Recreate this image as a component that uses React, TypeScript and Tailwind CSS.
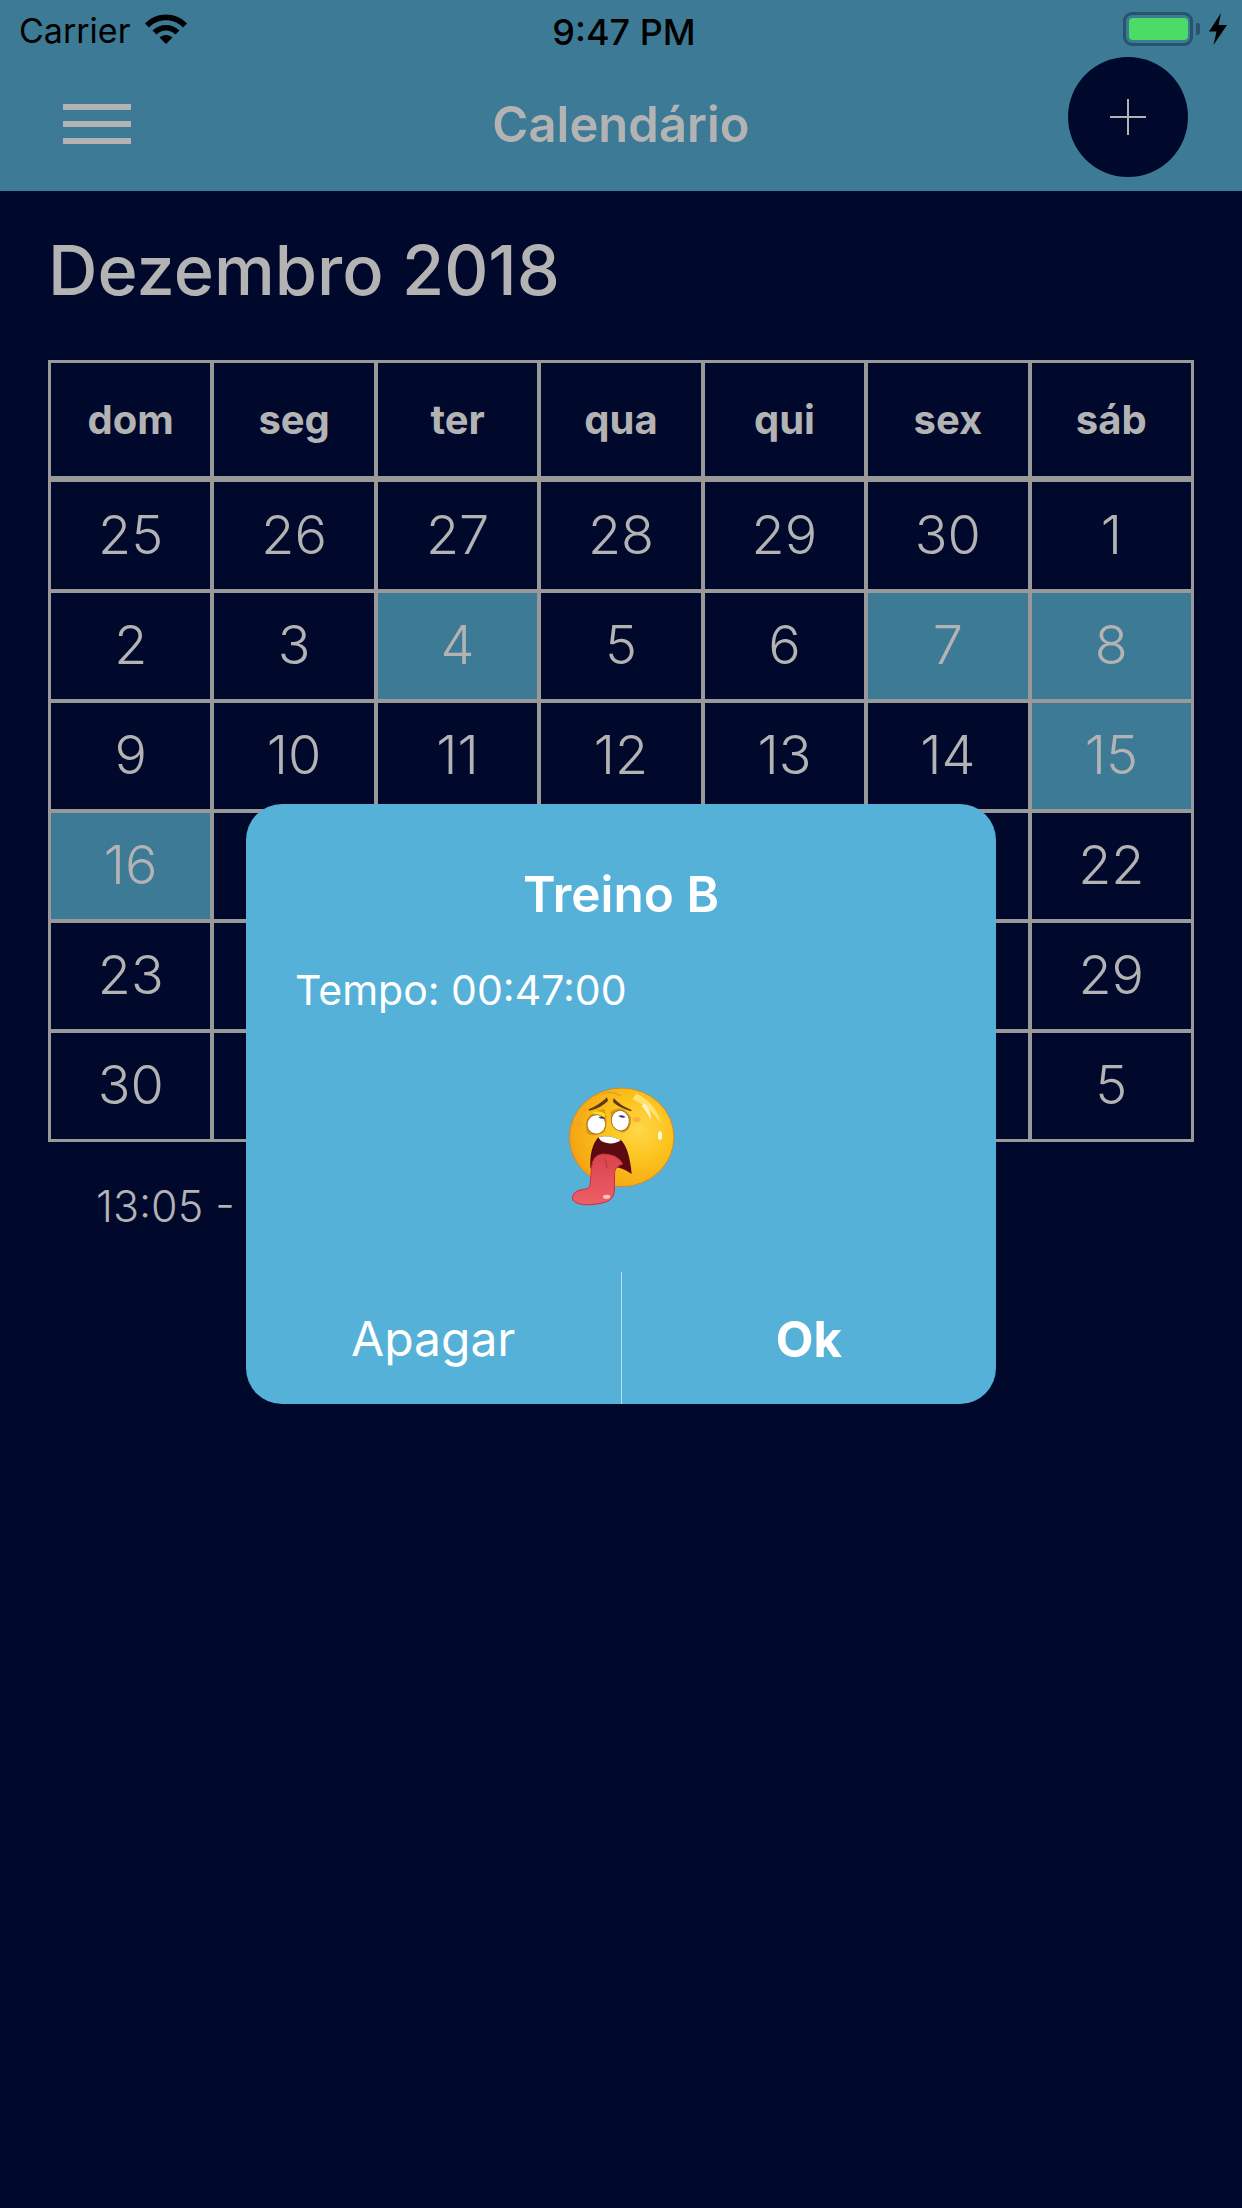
const rows = [
  [25, 26, 27, 28, 29, 30, 1],
  [2, 3, 4, 5, 6, 7, 8],
  [9, 10, 11, 12, 13, 14, 15],
  [16, 17, 18, 19, 20, 21, 22],
  [23, 24, 25, 26, 27, 28, 29],
  [30, 31, 1, 2, 3, 4, 5],
];
const days = ["dom", "seg", "ter", "qua", "qui", "sex", "sáb"];
const marked = new Set(["1-2", "1-5", "1-6", "2-6", "3-0"]);

function Emoji() {
  return (
    <svg width="200" height="170" viewBox="0 0 600 510" className="block">
      <defs>
        <radialGradient id="face" cx="0.66" cy="0.42" r="0.72">
          <stop offset="0" stopColor="#ffd84a" />
          <stop offset="0.45" stopColor="#fcc21c" />
          <stop offset="0.85" stopColor="#f6a914" />
          <stop offset="1" stopColor="#ee9a12" />
        </radialGradient>
        <linearGradient id="tongue" x1="0" y1="0" x2="0" y2="1">
          <stop offset="0" stopColor="#d9434f" />
          <stop offset="1" stopColor="#ee5f66" />
        </linearGradient>
      </defs>
      <ellipse cx="302" cy="232" rx="157" ry="148" fill="url(#face)" stroke="#c98a3a" strokeWidth="3" />
      <path d="M345 100 Q405 130 420 190 Q385 140 335 118 Z" fill="#ffe98a" opacity="0.75" />
      <path d="M370 130 Q390 148 390 180 Q378 155 362 138 Z" fill="#fff8d0" opacity="0.9" />
      <ellipse cx="417" cy="227" rx="6" ry="13" fill="#fffbe0" />
      <ellipse cx="347" cy="179" rx="12" ry="7" fill="#f79a3a" opacity="0.6" />
      <ellipse cx="174" cy="192" rx="9" ry="7" fill="#f79a3a" opacity="0.5" />
      <path d="M194 195 Q203 150 250 148 Q264 182 250 216 Q214 234 197 220 Z" fill="#dc9a14" />
      <path d="M268 156 Q300 128 330 172 Q332 212 305 218 Q270 208 268 156 Z" fill="#dc9a14" />
      <path d="M212 158 Q235 148 254 163 L248 176 Q225 163 212 158 Z" fill="#f2e020" />
      <path d="M282 152 Q305 148 322 172 L312 172 Q298 158 282 152 Z" fill="#f2e020" />
      <ellipse cx="226" cy="193" rx="28" ry="29" fill="#fff" stroke="#a87420" strokeWidth="3" transform="rotate(12 226 193)" />
      <ellipse cx="298" cy="182" rx="27" ry="31" fill="#fff" stroke="#a87420" strokeWidth="3" transform="rotate(-10 298 182)" />
      <path d="M232 172 Q245 165 252 176 Q242 178 232 172 Z" fill="#3d2a86" />
      <path d="M292 168 Q304 162 314 172 Q302 176 292 168 Z" fill="#3d2a86" />
      <path d="M203 148 Q235 135 258 112 L261 122 Q238 146 205 152 Z" fill="#5c3a12" />
      <path d="M278 114 Q296 136 332 150 L330 154 Q295 144 276 126 Z" fill="#5c3a12" />
      <path d="M245 102 Q270 90 300 108" fill="none" stroke="#dc9c20" strokeWidth="3" />
      <path d="M208 325 Q205 262 232 232 Q262 222 300 240 Q325 265 332 342 Q300 320 280 322 Z" fill="#5a0a10" />
      <path d="M232 232 Q262 222 300 240 Q285 252 262 250 Q240 248 232 232 Z" fill="#fff" />
      <path d="M212 320 Q215 285 245 282 Q290 282 305 312 Q285 318 281 335 L280 395 Q278 425 235 431 Q175 442 155 420 Q150 395 185 388 Q205 388 207 375 Z" fill="url(#tongue)" stroke="#c8323f" strokeWidth="3" />
      <path d="M250 295 Q258 305 258 325" fill="none" stroke="#b83240" strokeWidth="3" />
      <ellipse cx="257" cy="410" rx="11" ry="6" fill="#ffc4c4" />
    </svg>
  );
}

export default function App() {
  return (
    <div className="relative w-[1242px] h-[2208px] overflow-hidden bg-[#00082b] font-['Inter',sans-serif] text-[#b3b3b3]">
      <header className="h-[191px] bg-[#3c7a96]">
        <div className="relative flex h-[57px] items-center justify-between pl-[19px] pr-[15px] text-black">
          <div className="flex items-center gap-[15px]">
            <span className="mt-[4px] text-[34px] leading-none">Carrier</span>
            <svg width="42" height="30" viewBox="0 0 42 30">
              <path d="M0 9.500C11.500-2.500 30.500-2.500 42 9.500L38 13.500C28.500 3.800 13.500 3.800 4 13.500Z" fill="#000" />
              <path d="M7.500 16.500C14.500 9 27.500 9 34.500 16.500L30.500 20.500C25 15 17 15 11.500 20.500Z" fill="#000" />
              <path d="M14.500 23.500C18 20 24 20 27.500 23.500L21 30Z" fill="#000" />
            </svg>
          </div>
          <span className="absolute left-[6px] right-0 top-[14px] text-center text-[36px] leading-none font-medium">9:47 PM</span>
          <div className="flex items-center">
            <div className="flex h-[34px] w-[70px] items-center justify-center rounded-[9px] border-[3px] border-[#27546a]">
              <div className="h-[22px] w-[59px] rounded-[4px] bg-[#4bdc68]" />
            </div>
            <div className="ml-[3px] h-[12px] w-[4px] rounded-r-[3px] bg-[#27546a]" />
            <svg width="18" height="32" viewBox="0 0 18 32" className="ml-[9px]">
              <path d="M12 0L0 18.500H7.500L4.500 32L18 12H9.500Z" fill="#000" />
            </svg>
          </div>
        </div>
        <nav className="relative flex h-[134px] items-center justify-between pl-[63px] pr-[54px]">
          <div className="flex w-[68px] flex-col gap-[11px]">
            <div className="h-[6px] bg-[#b3b3b3]" />
            <div className="h-[6px] bg-[#b3b3b3]" />
            <div className="h-[6px] bg-[#b3b3b3]" />
          </div>
          <span className="absolute left-0 right-0 text-center text-[49px] leading-none font-semibold">Calendário</span>
          <div className="flex h-[120px] w-[120px] items-center justify-center self-start rounded-full bg-[#00082b]">
            <svg width="36" height="36" viewBox="0 0 36 36">
              <path d="M18 0V36M0 18H36" stroke="#b3b3b3" strokeWidth="2" fill="none" />
            </svg>
          </div>
        </nav>
      </header>

      <main className="px-[48px]">
        <h1 className="flex h-[169px] items-center pb-[9px] text-[68.500px] leading-none font-medium">Dezembro 2018</h1>
        <div className="grid grid-cols-7 border-x border-[#999999]">
          {days.map((d) => (
            <div key={d} className="flex h-[119px] items-center justify-center border-x-2 border-y-[3px] border-[#999999] text-[40px] font-bold">
              {d}
            </div>
          ))}
        </div>
        {rows.map((r, i) => (
          <div key={i} className="grid grid-cols-7 border-x border-[#999999]">
            {r.map((n, j) => (
              <div
                key={j}
                className={`flex items-center justify-center border-x-2 border-[#999999] pb-[3px] text-[54px] font-[350] ${i === 0 ? "h-[112px] border-t-[3px] border-b-2" : i === 5 ? "h-[111px] border-t-2 border-b-[3px]" : "h-[110px] border-t-2 border-b-2"} ${marked.has(`${i}-${j}`) ? "bg-[#3c7a96]" : ""}`}
              >
                {n}
              </div>
            ))}
          </div>
        ))}
        <p className="mt-[40px] pl-[48px] text-[43px] leading-[48px] font-[350]">13:05 - Treino B</p>
      </main>

      <div className="absolute left-[246px] top-[804px] flex h-[600px] w-[750px] flex-col rounded-[36px] bg-[#55b1d8] text-white">
        <h2 className="mt-[62px] text-center text-[49.500px] leading-[56px] font-semibold">Treino B</h2>
        <p className="mt-[44px] pl-[49px] text-[41px] leading-[48px]">Tempo: 00:47:00</p>
        <div className="mt-[46px] flex justify-center">
          <Emoji />
        </div>
        <div className="mt-auto flex h-[132px]">
          <button className="flex-1 pt-[2px] text-center text-[48px] leading-none">Apagar</button>
          <div className="w-px bg-[#b9dff0]" />
          <button className="flex-1 pt-[2px] text-center text-[49px] leading-none font-bold">Ok</button>
        </div>
      </div>
    </div>
  );
}
